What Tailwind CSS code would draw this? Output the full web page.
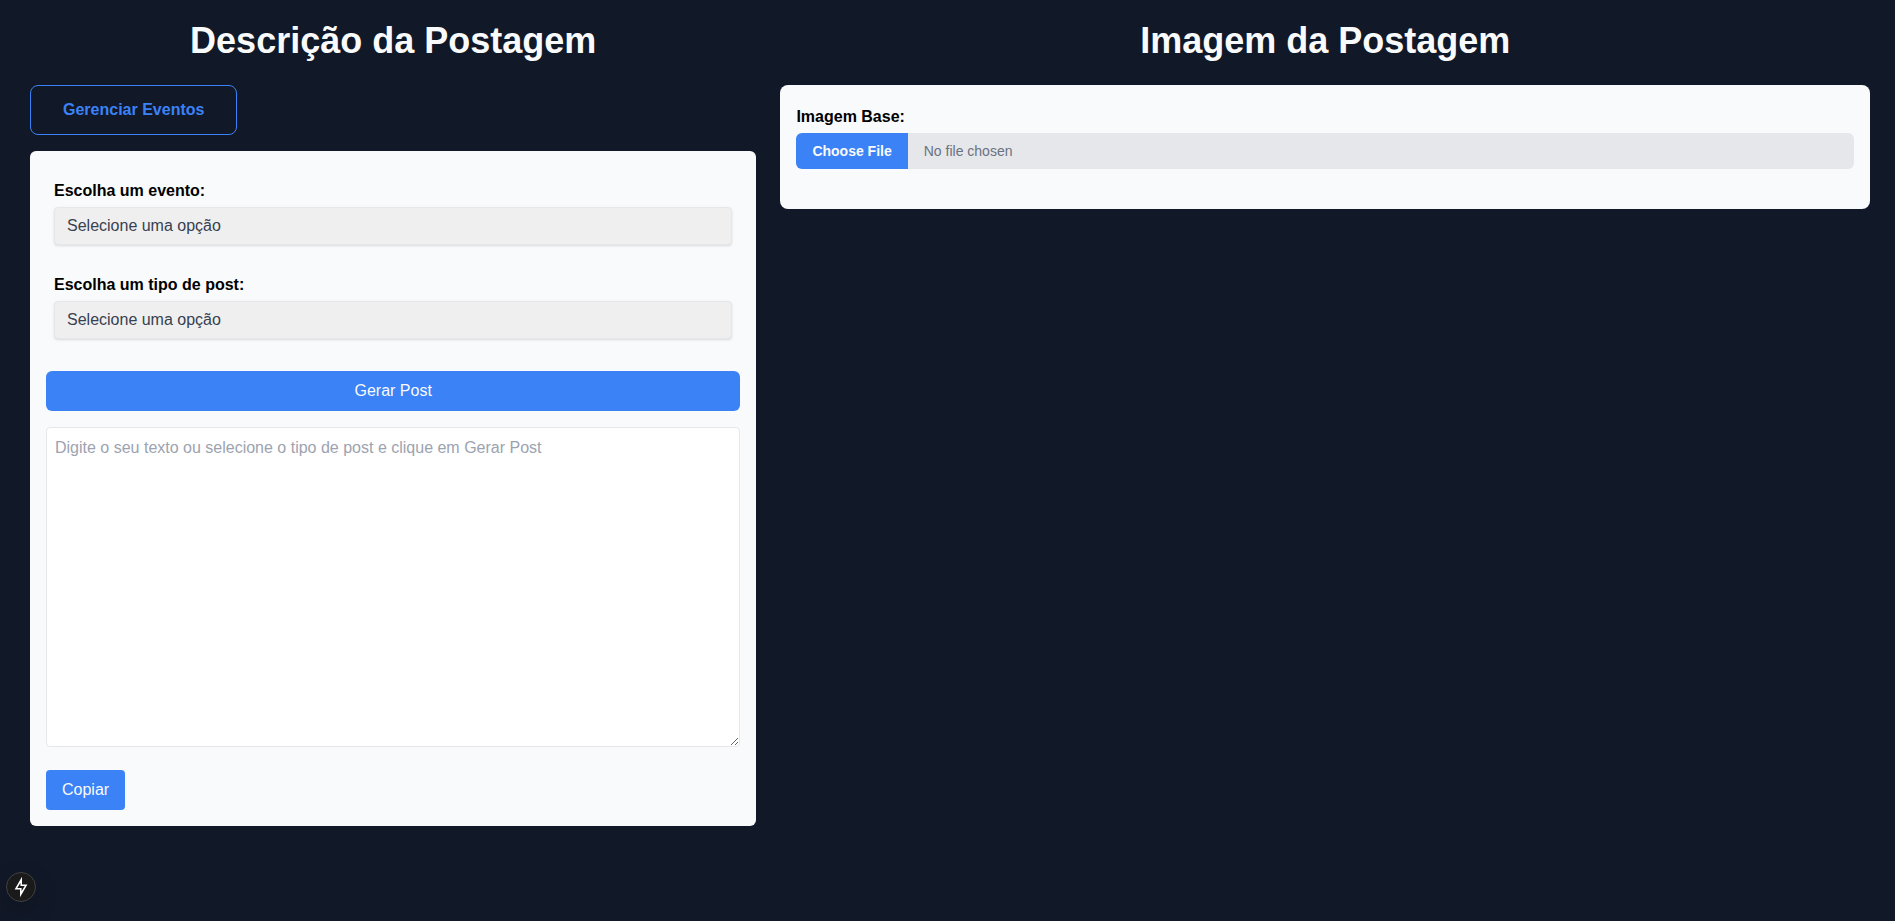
<!DOCTYPE html>
<html lang="pt-BR">
<head>
<meta charset="utf-8">
<title>Postagem</title>
<script src="https://cdn.jsdelivr.net/npm/@tailwindcss/browser@4"></script>
</head>
<body class="h-screen overflow-hidden bg-[#111827] font-['Liberation_Sans',sans-serif] text-base text-black">
<main class="flex items-start gap-6 pt-[21px] pr-[25px] pl-[30px]">
  <section class="w-[726.4px] shrink-0">
    <h1 class="text-center text-4xl font-bold text-[#f9fafb]">Descrição da Postagem</h1>
    <button class="mt-6 block rounded-lg border border-[#3b82f6] px-8 py-3 font-bold text-[#3b82f6]">Gerenciar Eventos</button>
    <div class="mt-4 rounded-md bg-[#f9fafb] px-4 pt-7 pb-4">
      <div class="px-2">
        <label class="block font-bold">Escolha um evento:</label>
        <button class="mt-1 block w-full rounded-[4px] border border-[#e5e7eb] bg-[#efefef] px-3 py-2 text-left leading-tight text-[#374151] shadow">Selecione uma opção</button>
      </div>
      <div class="mt-7 px-2">
        <label class="block font-bold">Escolha um tipo de post:</label>
        <button class="mt-1 block w-full rounded-[4px] border border-[#e5e7eb] bg-[#efefef] px-3 py-2 text-left leading-tight text-[#374151] shadow">Selecione uma opção</button>
      </div>
      <button class="mt-8 block h-10 w-full rounded-md bg-[#3b82f6] text-[#f9fafb]">Gerar Post</button>
      <textarea class="mt-4 block h-80 w-full resize rounded-[4px] border border-[#e5e7eb] bg-white p-2 placeholder:text-[#9ca3af]" placeholder="Digite o seu texto ou selecione o tipo de post e clique em Gerar Post"></textarea>
      <button class="mt-[23px] block h-10 rounded-[4px] bg-[#3b82f6] px-4 text-[#f9fafb]">Copiar</button>
    </div>
  </section>
  <section class="min-w-0 flex-1">
    <h1 class="text-center text-4xl font-bold text-[#f9fafb]">Imagem da Postagem</h1>
    <div class="mt-6 h-[124px] rounded-lg bg-[#f9fafb] px-4 pt-5">
      <label class="block font-bold">Imagem Base:</label>
      <input type="file" class="mt-1 block w-full rounded-md bg-[#e5e7eb] text-sm text-[#6b7280] file:mr-4 file:border-0 file:bg-[#3b82f6] file:px-4 file:py-2 file:text-sm file:font-semibold file:text-[#f9fafb]">
    </div>
  </section>
</main>
<div class="fixed bottom-[19px] left-[6px] flex size-[30px] items-center justify-center rounded-full border border-[#414143] bg-[#1a1a1a] shadow-[0_8px_24px_rgba(0,0,0,0.2)]">
  <svg class="size-4 shrink-0 overflow-visible" viewBox="0 0 16 16" fill="none" stroke="#fff" stroke-width="1.6" stroke-linejoin="miter"><path d="M8.2 0.8V6.3H13L7.8 15.2V9.7H3Z"/></svg>
</div>
</body>
</html>
